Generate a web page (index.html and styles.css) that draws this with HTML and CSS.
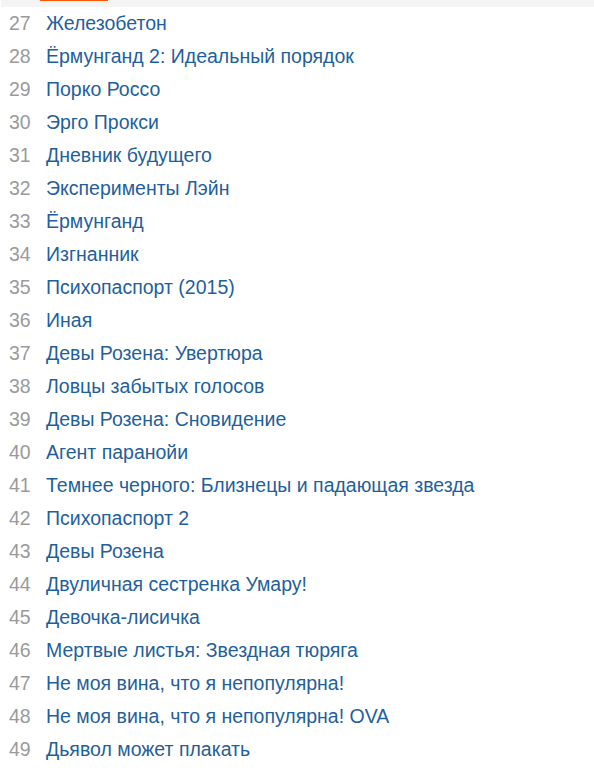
FILE: index.html
```html
<!DOCTYPE html>
<html lang="ru">
<head>
<meta charset="utf-8">
<title>Список</title>
<link rel="stylesheet" href="styles.css">
</head>
<body>
<ol class="list">
  <li class="row current"><span class="num">26</span><span class="title active">Акира</span></li>
  <li class="row"><span class="num">27</span><a class="title">Железобетон</a></li>
  <li class="row"><span class="num">28</span><a class="title">Ёрмунганд 2: Идеальный порядок</a></li>
  <li class="row"><span class="num">29</span><a class="title">Порко Россо</a></li>
  <li class="row"><span class="num">30</span><a class="title">Эрго Прокси</a></li>
  <li class="row"><span class="num">31</span><a class="title">Дневник будущего</a></li>
  <li class="row"><span class="num">32</span><a class="title">Эксперименты Лэйн</a></li>
  <li class="row"><span class="num">33</span><a class="title">Ёрмунганд</a></li>
  <li class="row"><span class="num">34</span><a class="title">Изгнанник</a></li>
  <li class="row"><span class="num">35</span><a class="title">Психопаспорт (2015)</a></li>
  <li class="row"><span class="num">36</span><a class="title">Иная</a></li>
  <li class="row"><span class="num">37</span><a class="title">Девы Розена: Увертюра</a></li>
  <li class="row"><span class="num">38</span><a class="title">Ловцы забытых голосов</a></li>
  <li class="row"><span class="num">39</span><a class="title">Девы Розена: Сновидение</a></li>
  <li class="row"><span class="num">40</span><a class="title">Агент паранойи</a></li>
  <li class="row"><span class="num">41</span><a class="title">Темнее черного: Близнецы и падающая звезда</a></li>
  <li class="row"><span class="num">42</span><a class="title">Психопаспорт 2</a></li>
  <li class="row"><span class="num">43</span><a class="title">Девы Розена</a></li>
  <li class="row"><span class="num">44</span><a class="title">Двуличная сестренка Умару!</a></li>
  <li class="row"><span class="num">45</span><a class="title">Девочка-лисичка</a></li>
  <li class="row"><span class="num">46</span><a class="title">Мертвые листья: Звездная тюряга</a></li>
  <li class="row"><span class="num">47</span><a class="title">Не моя вина, что я непопулярна!</a></li>
  <li class="row"><span class="num">48</span><a class="title">Не моя вина, что я непопулярна! OVA</a></li>
  <li class="row"><span class="num">49</span><a class="title">Дьявол может плакать</a></li>
</ol>
</body>
</html>
```
FILE: styles.css
```css
html, body {
  margin: 0;
  padding: 0;
  background: #fff;
  overflow: hidden;
}
.list {
  list-style: none;
  margin: -26px 0 0 1px;
  padding: 0;
  font-family: "Liberation Sans", Arial, sans-serif;
  font-size: 19.5px;
}
.row {
  display: flex;
  align-items: center;
  height: 33px;
  line-height: 33px;
  padding-left: 8px;
}
.row.current {
  background: #f4f4f4;
  align-items: flex-start;
}
.num {
  width: 37px;
  flex: none;
  color: #9a9a9a;
}
.title {
  color: #1f5f9c;
  text-decoration: none;
  white-space: nowrap;
}
.title.active {
  display: block;
  box-sizing: border-box;
  width: 68px;
  height: 27px;
  line-height: 22px;
  margin-left: -6px;
  padding: 0 6px;
  color: #ff5400;
  border-bottom: 2px solid #ff5400;
  overflow: hidden;
}
```
